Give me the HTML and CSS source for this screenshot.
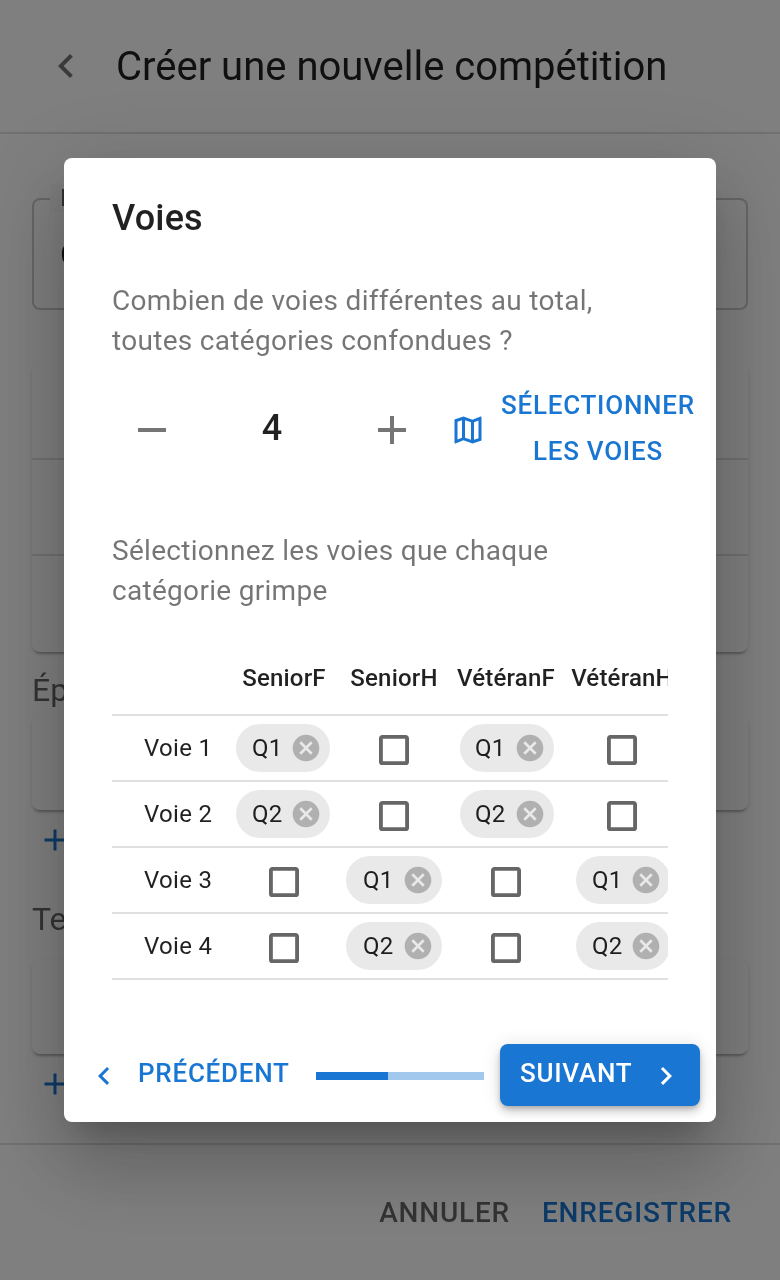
FILE: index.html
```html
<!DOCTYPE html>
<html lang="fr">
<head>
  <meta charset="utf-8">
  <title>Créer une nouvelle compétition</title>
  <link rel="stylesheet" href="styles.css">
</head>
<body>
<div class="page">
  <header class="topbar">
    <svg class="icon back" viewBox="0 0 24 24"><path d="M15.41,16.58L10.83,12L15.41,7.41L14,6L8,12L14,18L15.41,16.58Z"/></svg>
    <h1>Créer une nouvelle compétition</h1>
  </header>

  <main class="form">
    <div class="field">
      <span class="field-label">Nom</span>
      <span class="field-value">Compétition</span>
    </div>
    <div class="panels">
      <div class="panel"></div>
      <div class="panel"></div>
      <div class="panel"></div>
    </div>
    <h2 class="group-title">Épreuves</h2>
    <div class="card"></div>
    <div class="add"><svg class="icon" viewBox="0 0 24 24"><path d="M19,13H13V19H11V13H5V11H11V5H13V11H19V13Z"/></svg></div>
    <h2 class="group-title second">Temps</h2>
    <div class="card"></div>
    <div class="add"><svg class="icon" viewBox="0 0 24 24"><path d="M19,13H13V19H11V13H5V11H11V5H13V11H19V13Z"/></svg></div>
  </main>

  <footer class="bottombar">
    <span class="cancel">ANNULER</span>
    <span class="save">ENREGISTRER</span>
  </footer>

  <div class="scrim">
    <section class="dialog">
      <h2 class="dialog-title">Voies</h2>
      <p class="hint first">Combien de voies différentes au total, toutes catégories confondues ?</p>

      <div class="counter">
        <span class="step"><svg class="icon" viewBox="0 0 24 24"><path d="M19,13H5V11H19V13Z"/></svg></span>
        <span class="count">4</span>
        <span class="step"><svg class="icon" viewBox="0 0 24 24"><path d="M19,13H13V19H11V13H5V11H11V5H13V11H19V13Z"/></svg></span>
        <svg class="icon map" viewBox="0 0 24 24"><path d="M20.5,3L20.34,3.03L15,5.1L9,3L3.36,4.9C3.15,4.97 3,5.15 3,5.38V20.5A0.5,0.5 0 0,0 3.5,21L3.66,20.97L9,18.9L15,21L20.64,19.1C20.85,19.03 21,18.85 21,18.62V3.5A0.5,0.5 0 0,0 20.5,3M10,5.47L14,6.87V18.53L10,17.13V5.47M5,6.46L8,5.45V17.15L5,18.31V6.46M19,17.54L16,18.55V6.86L19,5.7V17.54Z"/></svg>
        <span class="pick">SÉLECTIONNER<br>LES VOIES</span>
      </div>

      <p class="hint second">Sélectionnez les voies que chaque catégorie grimpe</p>

      <div class="grid-clip">
        <div class="row head">
          <span></span><span>SeniorF</span><span>SeniorH</span><span>VétéranF</span><span>VétéranH</span>
        </div>
        <div class="row">
          <span class="route">Voie 1</span>
          <span class="cell"><span class="chip">Q1<svg class="chip-x" viewBox="0 0 24 24"><use href="#close"/></svg></span></span>
          <span class="cell"><svg class="box" viewBox="0 0 24 24"><use href="#blank"/></svg></span>
          <span class="cell"><span class="chip">Q1<svg class="chip-x" viewBox="0 0 24 24"><use href="#close"/></svg></span></span>
          <span class="cell"><svg class="box" viewBox="0 0 24 24"><use href="#blank"/></svg></span>
        </div>
        <div class="row">
          <span class="route">Voie 2</span>
          <span class="cell"><span class="chip">Q2<svg class="chip-x" viewBox="0 0 24 24"><use href="#close"/></svg></span></span>
          <span class="cell"><svg class="box" viewBox="0 0 24 24"><use href="#blank"/></svg></span>
          <span class="cell"><span class="chip">Q2<svg class="chip-x" viewBox="0 0 24 24"><use href="#close"/></svg></span></span>
          <span class="cell"><svg class="box" viewBox="0 0 24 24"><use href="#blank"/></svg></span>
        </div>
        <div class="row">
          <span class="route">Voie 3</span>
          <span class="cell"><svg class="box" viewBox="0 0 24 24"><use href="#blank"/></svg></span>
          <span class="cell"><span class="chip">Q1<svg class="chip-x" viewBox="0 0 24 24"><use href="#close"/></svg></span></span>
          <span class="cell"><svg class="box" viewBox="0 0 24 24"><use href="#blank"/></svg></span>
          <span class="cell"><span class="chip">Q1<svg class="chip-x" viewBox="0 0 24 24"><use href="#close"/></svg></span></span>
        </div>
        <div class="row">
          <span class="route">Voie 4</span>
          <span class="cell"><svg class="box" viewBox="0 0 24 24"><use href="#blank"/></svg></span>
          <span class="cell"><span class="chip">Q2<svg class="chip-x" viewBox="0 0 24 24"><use href="#close"/></svg></span></span>
          <span class="cell"><svg class="box" viewBox="0 0 24 24"><use href="#blank"/></svg></span>
          <span class="cell"><span class="chip">Q2<svg class="chip-x" viewBox="0 0 24 24"><use href="#close"/></svg></span></span>
        </div>
      </div>

      <div class="nav">
        <span class="prev">
          <svg class="icon nav-icon" viewBox="0 0 24 24"><path d="M15.41,16.58L10.83,12L15.41,7.41L14,6L8,12L14,18L15.41,16.58Z"/></svg>
          PRÉCÉDENT
        </span>
        <span class="progress"><span class="progress-fill"></span></span>
        <span class="next">
          SUIVANT
          <svg class="icon nav-icon" viewBox="0 0 24 24"><path d="M8.59,16.58L13.17,12L8.59,7.41L10,6L16,12L10,18L8.59,16.58Z"/></svg>
        </span>
      </div>
    </section>
  </div>
</div>

<svg class="defs" width="0" height="0">
  <symbol id="blank" viewBox="0 0 24 24"><path d="M19,3H5C3.89,3 3,3.89 3,5V19A2,2 0 0,0 5,21H19A2,2 0 0,0 21,19V5C21,3.89 20.1,3 19,3M18.7,5.3V18.7H5.3V5.3H18.7Z"/></symbol>
  <symbol id="close" viewBox="0 0 24 24"><path d="M12,2C17.53,2 22,6.47 22,12C22,17.53 17.53,22 12,22C6.47,22 2,17.53 2,12C2,6.47 6.47,2 12,2M15.59,7L12,10.59L8.41,7L7,8.41L10.59,12L7,15.59L8.41,17L12,13.41L15.59,17L17,15.59L13.41,12L17,8.41L15.59,7Z"/></symbol>
</svg>
</body>
</html>
```

FILE: styles.css
```css
* { box-sizing: border-box; }

html, body { margin: 0; }

body {
  font-family: Roboto, "Liberation Sans", sans-serif;
  color: rgba(0, 0, 0, .87);
  background: #fff;
}

.defs { position: absolute; }

.icon { display: block; fill: currentColor; }

.page {
  position: relative;
  display: flex;
  flex-direction: column;
  width: 780px;
  height: 1280px;
  overflow: hidden;
  will-change: transform;
}

/* page behind the dialog */
.topbar {
  display: flex;
  align-items: center;
  height: 134px;
  padding-left: 42px;
  border-bottom: 2px solid rgba(0, 0, 0, .12);
}

.back { width: 48px; height: 48px; color: rgba(0, 0, 0, .54); }

.topbar h1 {
  margin: 2px 0 0 26px;
  font-size: 40px;
  font-weight: 400;
  line-height: 1;
}

.form { flex: 1; padding: 64px 32px 0; }

.field {
  position: relative;
  display: flex;
  align-items: center;
  height: 112px;
  padding: 0 26px;
  border: 2px solid rgba(0, 0, 0, .2);
  border-radius: 8px;
}

.field-label {
  position: absolute;
  left: 16px;
  top: -16px;
  padding: 0 10px;
  background: #fff;
  font-size: 24px;
  color: rgba(0, 0, 0, .6);
}

.field-value { font-size: 32px; }

.panels {
  margin-top: 54px;
  border-radius: 8px;
  box-shadow: 0 4px 2px -2px rgba(0, 0, 0, .2), 0 2px 4px rgba(0, 0, 0, .14);
}

.panel { height: 96px; border-bottom: 2px solid rgba(0, 0, 0, .12); }
.panel:last-child { border-bottom: 0; }

.group-title {
  height: 64px;
  margin: 0;
  font-size: 32px;
  font-weight: 400;
  line-height: 76px;
  color: rgba(0, 0, 0, .6);
}

.group-title.second { height: 90px; line-height: 98px; }

.card {
  height: 94px;
  border-radius: 8px;
  box-shadow: 0 4px 2px -2px rgba(0, 0, 0, .2), 0 2px 4px rgba(0, 0, 0, .14);
}

.add { height: 60px; padding: 12px 0 0 5px; color: #1976d2; }
.add .icon { width: 36px; height: 36px; }

.bottombar {
  display: flex;
  justify-content: flex-end;
  align-items: center;
  gap: 32px;
  height: 137px;
  padding: 0 48px 0 0;
  border-top: 2px solid rgba(0, 0, 0, .12);
  font-size: 28px;
  font-weight: 500;
  letter-spacing: .8px;
}

.cancel { color: rgba(0, 0, 0, .6); }
.save { color: #1976d2; }

/* dialog */
.scrim {
  position: absolute;
  inset: 0;
  display: flex;
  align-items: center;
  justify-content: center;
  background: rgba(0, 0, 0, .5);
}

.dialog {
  width: 652px;
  height: 964px;
  padding: 0 48px;
  border-radius: 8px;
  background: #fff;
  box-shadow: 0 22px 30px -14px rgba(0, 0, 0, .2), 0 48px 76px 6px rgba(0, 0, 0, .14), 0 18px 92px 16px rgba(0, 0, 0, .12);
}

.dialog-title {
  margin: 0;
  padding-top: 38px;
  font-size: 36px;
  font-weight: 500;
  line-height: 44px;
  letter-spacing: .2px;
}

.hint {
  margin: 0;
  font-size: 28px;
  line-height: 40px;
  letter-spacing: .3px;
  color: rgba(0, 0, 0, .54);
}

.hint.first { margin-top: 41px; width: 500px; }
.hint.second { width: 480px; }

.counter {
  display: flex;
  align-items: center;
  height: 170px;
  margin-left: -20px;
  padding-bottom: 36px;
}

.step { flex: none; display: flex; justify-content: center; width: 120px; color: rgba(0, 0, 0, .54); }
.step .icon { width: 48px; height: 48px; margin-top: 4px; }

.count { flex: none; width: 120px; text-align: center; font-size: 36px; font-weight: 500; }

.map { flex: none; width: 36px; height: 36px; margin: 4px 15px 0 -2px; color: #1976d2; }

.pick {
  flex: none;
  font-size: 26px;
  font-weight: 500;
  line-height: 46px;
  letter-spacing: .75px;
  text-align: center;
  color: #1976d2;
}

.grid-clip { width: 556px; margin-top: 27px; overflow: hidden; }

.row {
  display: grid;
  grid-template-columns: 116px 112px 108px 116px 116px;
  align-items: center;
  width: 568px;
  height: 66px;
  border-bottom: 2px solid #e0e0e0;
  font-size: 24px;
  letter-spacing: .3px;
}

.row.head { height: 78px; padding-top: 4px; font-weight: 500; letter-spacing: .2px; text-align: center; white-space: nowrap; }
.row.head span { min-width: 0; }

.route { padding-left: 32px; }

.cell { display: flex; justify-content: center; align-items: center; }

.chip {
  display: inline-flex;
  flex: none;
  justify-content: space-between;
  align-items: center;
  width: 94px;
  height: 48px;
  padding: 0 8px 0 16px;
  border-radius: 24px;
  background: #e9e9e9;
  white-space: nowrap;
}

.cell:nth-child(2) .chip { margin-left: -2px; }
.cell:nth-child(3) .chip { width: 96px; padding-left: 17px; }
.cell:nth-child(4) .chip { margin-right: -2px; padding-left: 15px; }
.cell:nth-child(5) .chip { margin-right: -2px; }

.chip-x { width: 32px; height: 32px; fill: #b0b0b0; }

.box { width: 40px; height: 40px; margin-top: 4px; fill: #666; }

.nav {
  display: flex;
  align-items: center;
  height: 62px;
  margin: 64px -32px 0;
}

.prev, .next {
  display: flex;
  align-items: center;
  padding-bottom: 4px;
  font-size: 26px;
  font-weight: 500;
  letter-spacing: .75px;
  color: #1976d2;
}

.nav-icon { flex: none; width: 36px; height: 36px; margin-top: 6px; }

.prev { flex: none; width: 236px; padding-left: 6px; gap: 16px; }

.progress { flex: none; width: 168px; height: 8px; margin-top: 2px; background: #a3c8ed; }
.progress-fill { display: block; width: 72px; height: 8px; background: #1976d2; }

.next {
  flex: none;
  justify-content: space-between;
  width: 200px;
  height: 62px;
  margin-left: 16px;
  padding: 0 16px 4px 20px;
  border-radius: 8px;
  background: #1976d2;
  color: #fff;
  box-shadow: 0 3px 5px -1px rgba(0, 0, 0, .2), 0 6px 10px rgba(0, 0, 0, .14), 0 1px 18px rgba(0, 0, 0, .12);
}
```
